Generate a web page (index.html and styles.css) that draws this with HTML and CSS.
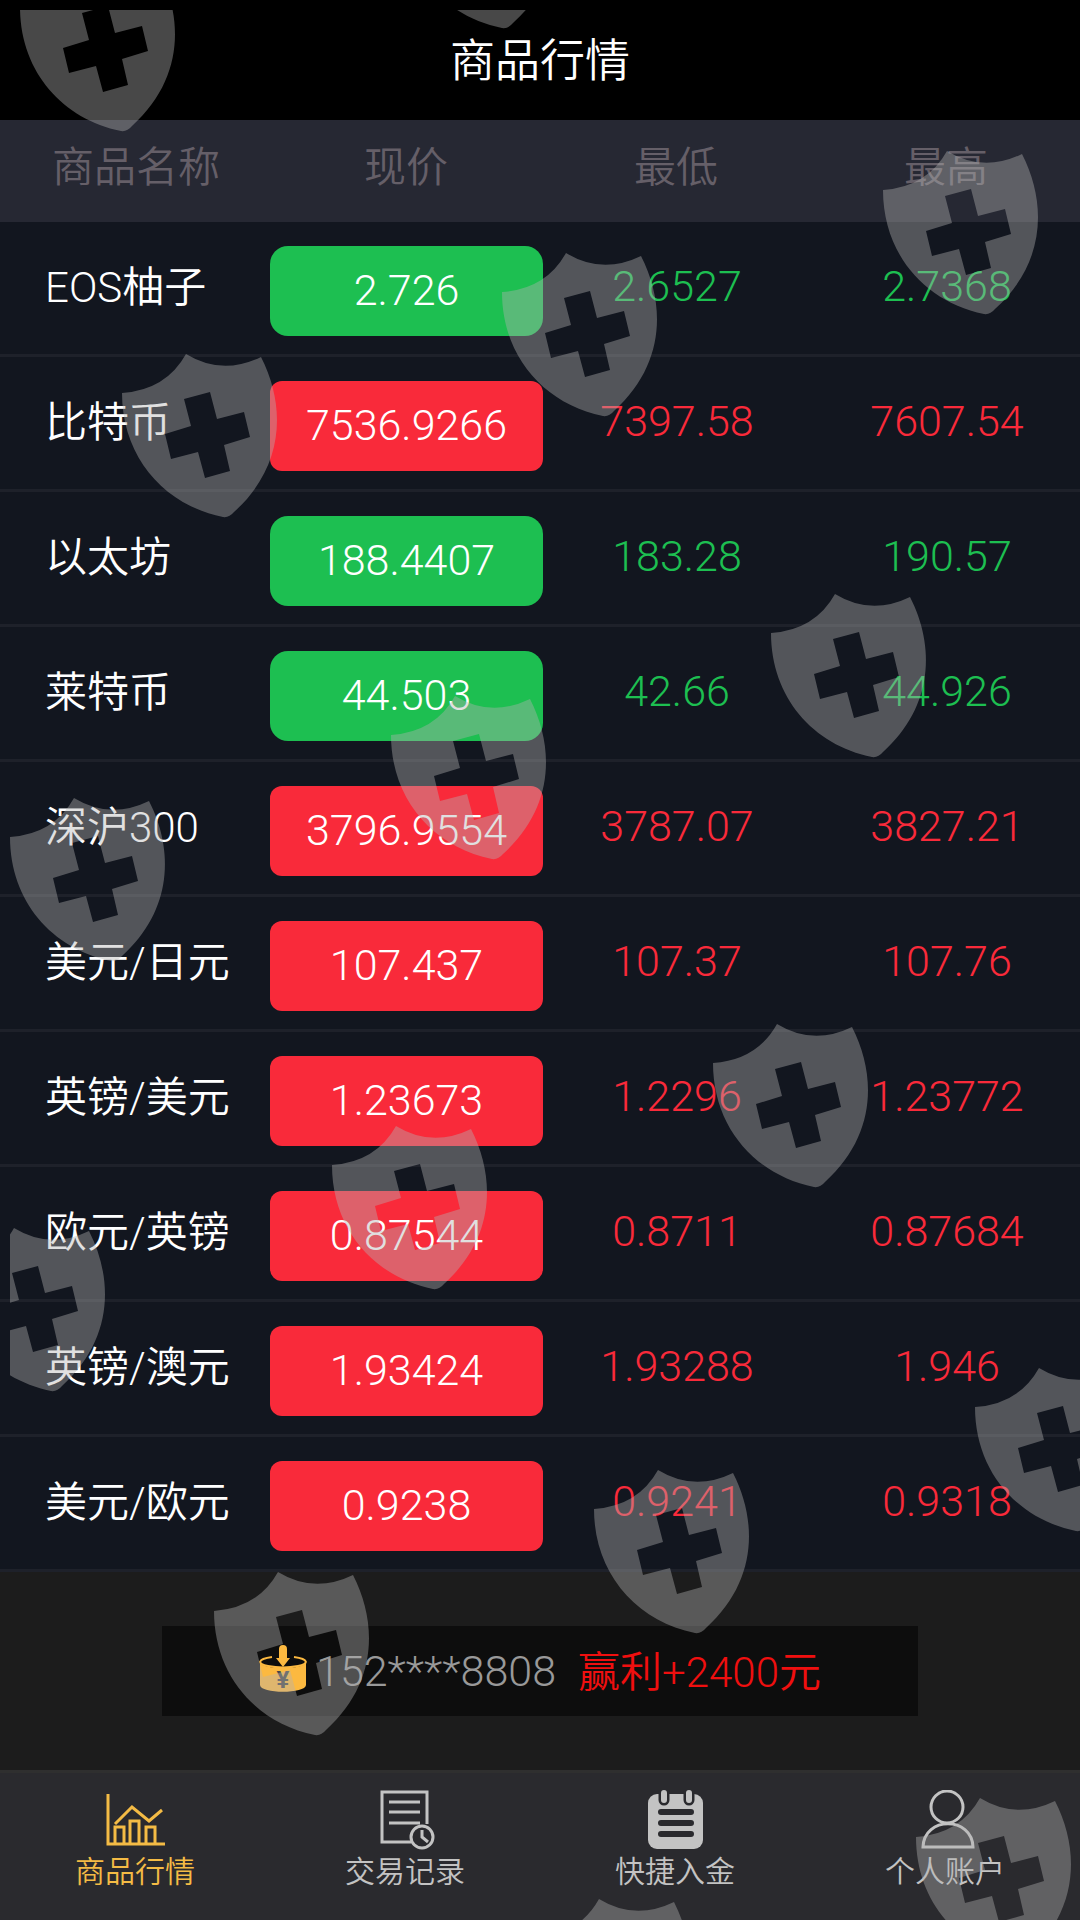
FILE: index.html
```html
<!DOCTYPE html>
<html lang="zh-CN">
  <head>
    <meta charset="utf-8">
    <meta name="viewport" content="width=device-width">
    <title>商品行情</title>
    <link rel="stylesheet" href="styles.css">
  </head>

  <body>
    <header class="header">
      <h1>商品行情</h1>
    </header>

    <table class="quotes">
      <thead>
        <tr><th>商品名称</th><th>现价</th><th>最低</th><th>最高</th></tr>
      </thead>
      <tbody>
        <tr class="down"><td>EOS柚子</td><td><button type="button">2.726</button></td><td>2.6527</td><td>2.7368</td></tr>
        <tr class="up"><td>比特币</td><td><button type="button">7536.9266</button></td><td>7397.58</td><td>7607.54</td></tr>
        <tr class="down"><td>以太坊</td><td><button type="button">188.4407</button></td><td>183.28</td><td>190.57</td></tr>
        <tr class="down"><td>莱特币</td><td><button type="button">44.503</button></td><td>42.66</td><td>44.926</td></tr>
        <tr class="up"><td>深沪300</td><td><button type="button">3796.9554</button></td><td>3787.07</td><td>3827.21</td></tr>
        <tr class="up"><td>美元/日元</td><td><button type="button">107.437</button></td><td>107.37</td><td>107.76</td></tr>
        <tr class="up"><td>英镑/美元</td><td><button type="button">1.23673</button></td><td>1.2296</td><td>1.23772</td></tr>
        <tr class="up"><td>欧元/英镑</td><td><button type="button">0.87544</button></td><td>0.8711</td><td>0.87684</td></tr>
        <tr class="up"><td>英镑/澳元</td><td><button type="button">1.93424</button></td><td>1.93288</td><td>1.946</td></tr>
        <tr class="up"><td>美元/欧元</td><td><button type="button">0.9238</button></td><td>0.9241</td><td>0.9318</td></tr>
      </tbody>
    </table>

    <section class="news">
      <p class="notice">
        <svg class="coin" viewBox="0 0 48 48">
          <path class="coin-side" d="M1 17C1 25 47 25 47 17V40C47 49 1 49 1 40Z"/>
          <path class="coin-rim" d="M13 12C-2 14-2 19 9 21Q24 24 39 21C50 19 50 14 35 12"/>
          <path class="coin-arrow" d="M20 4Q20 0 24 0T28 4V13H31L24 22L17 13H20Z"/>
          <text x="24" y="43">¥</text>
        </svg>
        <span class="phone">152****8808</span>
        <span class="profit">赢利+2400元</span>
      </p>
    </section>

    <nav class="tabs">
      <a href="#market" class="active">
        <svg viewBox="0 0 60 60">
          <path d="M3 4V54H60M10 34L27 17L44 31L57 20" stroke-width="3"/>
          <path d="M10 53V37H19V53M25 53V31H34V53M41 53V37H50V53" stroke-width="3"/>
        </svg>
        商品行情
      </a>
      <a href="#orders">
        <svg viewBox="0 0 60 60">
          <path d="M36 52H7V2H52V34M14 12H45M14 22H45M14 33H45" stroke-width="3"/>
          <circle cx="47" cy="47" r="11" stroke-width="3"/>
          <path d="M47 40V47L53 52" stroke-width="3"/>
        </svg>
        交易记录
      </a>
      <a href="#deposit">
        <svg viewBox="0 0 60 60">
          <rect class="solid" x="3" y="4" width="55" height="55" rx="9"/>
          <path class="cut" d="M19 2V10M44 2V10" stroke-width="11"/>
          <path class="round" d="M19 3V10M44 3V10" stroke-width="6"/>
          <path class="cut" d="M16 22H46M16 33H46M16 44H46" stroke-width="6"/>
        </svg>
        快捷入金
      </a>
      <a href="#account">
        <svg viewBox="0 0 60 60">
          <circle cx="32" cy="17" r="16" stroke-width="3"/>
          <path d="M8 57H58C57 26 9 26 8 57Z" stroke-width="3"/>
        </svg>
        个人账户
      </a>
    </nav>

    <!-- shield pattern over the whole page -->
    <svg class="shields" aria-hidden="true">
      <defs>
        <path id="shield" fill-rule="evenodd" d="M0 39Q44 36 64 0Q100 22 139 3C164 52 163 112 112 158Q107 164 101 163C42 151 0 103 0 39ZM62 45L69 72L43 80L49 105L76 98L83 124L108 117L102 91L128 83L122 58L95 65L88 38Z"/>
      </defs>
      <use href="#shield" x="10" y="-42"/>
      <use href="#shield" x="391" y="-145"/>
      <use href="#shield" x="873" y="141"/>
      <use href="#shield" x="492" y="243"/>
      <use href="#shield" x="112" y="344"/>
      <use href="#shield" x="761" y="584"/>
      <use href="#shield" x="381" y="686"/>
      <use href="#shield" x="0" y="788"/>
      <use href="#shield" x="703" y="1014"/>
      <use href="#shield" x="322" y="1116"/>
      <use href="#shield" x="-60" y="1218"/>
      <use href="#shield" x="965" y="1358"/>
      <use href="#shield" x="584" y="1460"/>
      <use href="#shield" x="204" y="1562"/>
      <use href="#shield" x="906" y="1788"/>
      <use href="#shield" x="525" y="1889"/>
    </svg>
  </body>
</html>
```
FILE: styles.css
```css
* {
  box-sizing: border-box;
}
body {
  position: relative;
  display: flex;
  flex-direction: column;
  min-height: 100vh;
  margin: 0;
  background: #1c1c1c;
  color: #fff;
  font-family: Roboto, "Noto Sans CJK SC", sans-serif;
  font-size: 42px;
  font-weight: 350;
}
.header {
  height: 120px;
  padding-top: 2px;
  background: #000;
  text-align: center;
}
.header h1 {
  margin: 0;
  font-size: 45px;
  font-weight: 350;
  line-height: 120px;
}

.quotes {
  width: 100%;
  table-layout: fixed;
  border-spacing: 0;
  background: #12161f;
  text-align: center;
}
.quotes th {
  height: 102px;
  padding: 0 0 16px 2px;
  background: #262833;
  color: #655f68;
  font-weight: 350;
}
.quotes td {
  height: 135px;
  padding: 0 0 4px 4px;
  border-bottom: 3px solid #1e212a;
  font-size: 43px;
  line-height: 60px;
}
.quotes td:first-child {
  padding: 0 0 0 45px;
  color: #fff;
  font-size: 42px;
  text-align: left;
  white-space: nowrap;
}
.quotes td:nth-child(2) {
  padding: 6px 0 0;
}
.quotes button {
  display: block;
  width: calc(100% + 3px);
  height: 90px;
  padding: 0 0 3px;
  border: 0;
  color: #fff;
  font: inherit;
}
.down {
  color: #1dbf51;
}
.down button {
  background: #1dbf51;
  border-radius: 18px;
}
.up {
  color: #f92a3a;
}
.up button {
  background: #f92a3a;
  border-radius: 12px;
}

.news {
  flex: 1;
  padding: 54px 15%;
}
.notice {
  display: flex;
  align-items: center;
  justify-content: center;
  height: 90px;
  margin: 0;
  background: #0d0d0d;
  line-height: 60px;
  white-space: nowrap;
}
.coin {
  width: 48px;
  height: 48px;
  margin: 0 9px 4px 0;
}
.coin-side,
.coin-arrow {
  fill: #fcb940;
}
.coin-rim {
  fill: #0d0d0d;
  stroke: #fcb940;
  stroke-width: 2;
}
.coin text {
  fill: #444;
  font-size: 24px;
  font-weight: 700;
  text-anchor: middle;
}
.phone {
  margin-right: 22px;
  color: #999;
  font-size: 43px;
}
.profit {
  padding-top: 3px;
  color: #f00f0f;
}

.tabs {
  display: flex;
  height: 150px;
  border-top: 3px solid #2f2f2f;
  background: #2a2a2e;
}
.tabs a {
  flex: 1;
  display: flex;
  flex-direction: column;
  align-items: center;
  padding-top: 17px;
  color: #c3c3c3;
  font-size: 30px;
  line-height: 44px;
  text-decoration: none;
}
.tabs .active {
  color: #f4bb45;
}
.tabs svg {
  width: 60px;
  height: 60px;
  fill: none;
  stroke: currentColor;
}
.tabs .solid {
  fill: currentColor;
  stroke: none;
}
.tabs .cut {
  stroke: #2a2a2e;
  stroke-linecap: round;
}
.tabs .round {
  stroke-linecap: round;
}

.shields {
  position: absolute;
  top: 10px;
  left: 10px;
  width: calc(100% - 10px);
  height: calc(100% - 10px);
  overflow: hidden;
  fill: #b4b4b4;
  opacity: 0.4;
  pointer-events: none;
}
```
